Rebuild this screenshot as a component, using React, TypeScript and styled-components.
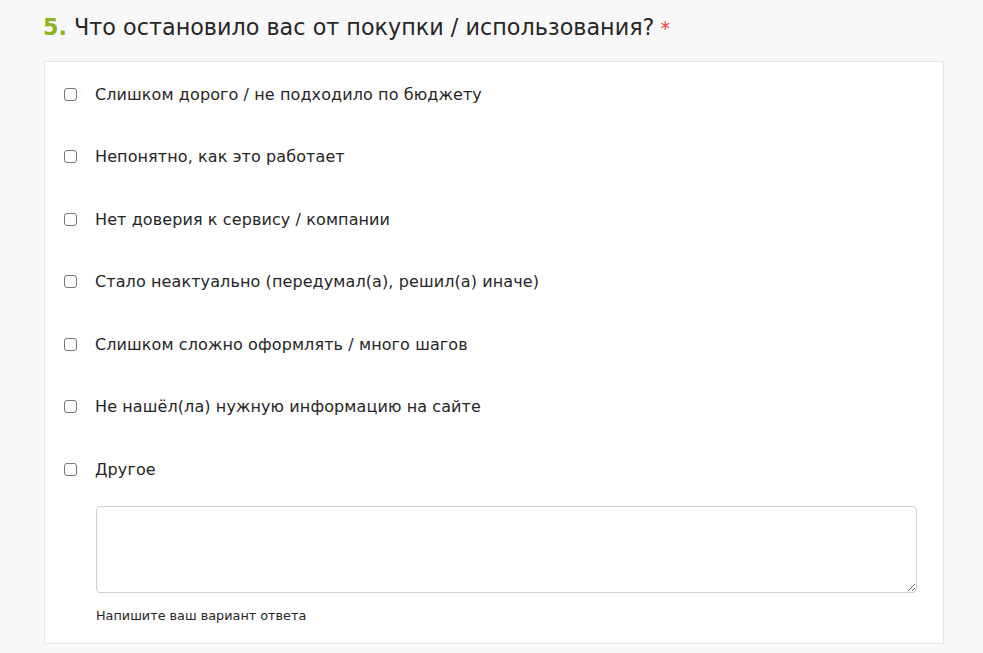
import styled, { createGlobalStyle } from "styled-components";

const Global = createGlobalStyle`
  html, body {
    margin: 0;
    padding: 0;
    background: #f8f8f8;
  }
  body {
    font-family: "DejaVu Sans", "Liberation Sans", sans-serif;
    color: #262626;
  }
`;

const options = [
  "Слишком дорого / не подходило по бюджету",
  "Непонятно, как это работает",
  "Нет доверия к сервису / компании",
  "Стало неактуально (передумал(а), решил(а) иначе)",
  "Слишком сложно оформлять / много шагов",
  "Не нашёл(ла) нужную информацию на сайте",
  "Другое",
];

const Page = styled.div`
  width: 983px;
  height: 653px;
  box-sizing: border-box;
  padding: 10px 40px 0 44px;
`;

const Title = styled.h2`
  margin: 0 0 0 -1px;
  font-size: 22.3px;
  font-weight: 400;
  line-height: 34px;
  color: #262626;
`;

const Num = styled.span`
  color: #8cb421;
  font-weight: 700;
`;

const Req = styled.span`
  color: #e8413c;
  margin-left: 6px;
  font-size: 19px;
`;

const Card = styled.div`
  margin-top: 16px;
  width: 900px;
  box-sizing: border-box;
  background: #fff;
  border: 1px solid #e6e6e6;
  padding: 20px 26px 20px 19px;
`;

const List = styled.div`
  display: flex;
  flex-direction: column;
  gap: 38.5px;
`;

const Row = styled.label`
  display: flex;
  align-items: center;
  height: 24px;
  font-size: 16px;
  letter-spacing: 0.1px;
  gap: 18px;
`;

const Box = styled.span`
  width: 11px;
  height: 11px;
  border: 1px solid #767676;
  border-radius: 3px;
  background: #fff;
  flex: none;
`;

const Other = styled.div`
  margin: 25px 0 0 32px;
`;

const Area = styled.textarea`
  display: block;
  width: 100%;
  height: 87px;
  box-sizing: border-box;
  border: 1px solid #cfcfcf;
  border-radius: 4px;
  resize: vertical;
  font: inherit;
`;

const Hint = styled.div`
  margin-top: 15px;
  font-size: 12.8px;
  color: #262626;
`;

export default function App() {
  return (
    <Page>
      <Global />
      <Title>
        <Num>5.</Num> Что остановило вас от покупки / использования?
        <Req>*</Req>
      </Title>
      <Card>
        <List>
          {options.map((o) => (
            <Row key={o}>
              <Box />
              {o}
            </Row>
          ))}
        </List>
        <Other>
          <Area />
          <Hint>Напишите ваш вариант ответа</Hint>
        </Other>
      </Card>
    </Page>
  );
}
